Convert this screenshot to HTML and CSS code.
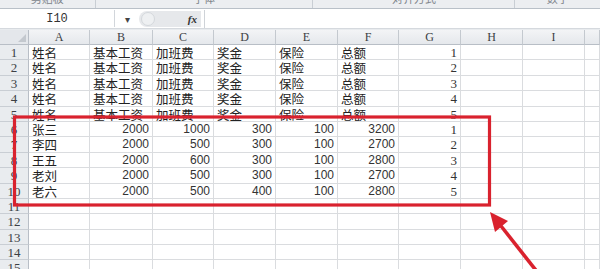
FILE: index.html
```html
<!DOCTYPE html>
<html lang="zh-CN">
<head>
  <meta charset="UTF-8" />
  <title>工资表</title>
  <link rel="stylesheet" href="styles.css">
</head>
<body>

<div class="ribbon">
  <div class="group g1"><span>剪贴板</span></div>
  <div class="group g2"><span>字体</span></div>
  <div class="group g3"><span>对齐方式</span></div>
  <div class="group g4"><span>数字</span></div>
</div>

<div class="formula-bar">
  <div class="name-box">I10</div>
  <div class="drop">▾</div>
  <div class="pill"><span class="knob"></span><span class="fx">fx</span></div>
  <div class="formula-input"></div>
</div>

<div class="sheet-wrap">
  <div class="sheet" id="sheet"></div>

  <svg class="mark" viewBox="0 0 600 269" width="600" height="269">
    <rect x="14.5" y="117" width="475" height="88" fill="none" stroke="#d9222e" stroke-width="3.2" />
    <line x1="501" y1="226" x2="542" y2="278" stroke="#d9222e" stroke-width="3.6" />
    <polygon points="490,212 508,221 495,232" fill="#d9222e" />
  </svg>
</div>

<script>
  const cols = ['A', 'B', 'C', 'D', 'E', 'F', 'G', 'H', 'I', ''];
  const heads = ['姓名', '基本工资', '加班费', '奖金', '保险', '总额'];
  const people = [
    ['张三', 2000, 1000, 300, 100, 3200, 1],
    ['李四', 2000, 500, 300, 100, 2700, 2],
    ['王五', 2000, 600, 300, 100, 2800, 3],
    ['老刘', 2000, 500, 300, 100, 2700, 4],
    ['老六', 2000, 500, 400, 100, 2800, 5]
  ];

  const sheet = document.getElementById('sheet');
  let html = '<div class="corner"></div>';
  cols.forEach(c => { html += `<div class="ch">${c}</div>`; });

  for (let r = 1; r <= 15; r++) {
    let cells = [];
    if (r <= 5) {
      cells = heads.map(t => ['txt', t]).concat([['g', r]]);
    } else if (r <= 10) {
      const p = people[r - 6];
      cells = [['txt', p[0]]];
      for (let i = 1; i <= 5; i++) cells.push(['num', p[i]]);
      cells.push(['g', p[6]]);
    }
    while (cells.length < 10) cells.push(['', '']);

    html += `<div class="rh">${r}</div>`;
    cells.forEach(([cls, v]) => { html += `<div class="c ${cls}">${v}</div>`; });
  }
  sheet.innerHTML = html;
</script>

</body>
</html>
```

FILE: styles.css
```css
body {
  margin: 0;
  width: 600px;
  height: 269px;
  overflow: hidden;
  background: #fff;
  font-family: "Noto Sans CJK SC", sans-serif;
  color: #222;
}
.ribbon {
  display: flex;
  height: 8px;
  overflow: hidden;
  background: #eceef1;
  border-bottom: 1px solid #b9c0c8;
}
.group {
  display: flex;
  justify-content: center;
  border-right: 1px solid #c9ced4;
}
.group span {
  margin-top: -9px;
  font-size: 11px;
  line-height: 14px;
  color: #80858c;
}
.g1 { width: 95px; }
.g2 { width: 218px; }
.g3 { width: 202px; }
.g4 { width: 85px; border-right: none; }

.formula-bar {
  display: flex;
  align-items: center;
  height: 19px;
  background: #fff;
  border-bottom: 1px solid #d5d9de;
}
.name-box {
  width: 114px;
  height: 17px;
  border-right: 1px solid #d2d6db;
  text-align: center;
  font-family: "Liberation Mono", monospace;
  font-size: 12px;
  line-height: 18px;
  color: #333;
}
.drop {
  width: 24px;
  text-align: center;
  font-size: 10px;
  color: #444;
}
.pill {
  display: flex;
  align-items: center;
  justify-content: space-between;
  width: 62px;
  height: 16px;
  background: #e6e8eb;
  border-radius: 8px 0 0 8px;
}
.knob {
  width: 12px;
  height: 12px;
  margin-left: 2px;
  border-radius: 50%;
  background: #eef0f2;
  border: 1px solid #d4d8dc;
}
.fx {
  margin-right: 4px;
  font-family: "Liberation Serif", serif;
  font-style: italic;
  font-weight: bold;
  font-size: 11px;
  color: #333;
}
.formula-input {
  flex: 1;
  height: 18px;
  margin-left: 3px;
  border-left: 1px solid #cfd3d8;
  background: #fff;
}

.sheet-wrap {
  position: relative;
  padding-top: 1px;
  background: #e8ebee;
}
.sheet {
  display: grid;
  grid-template-columns: 29px 61px 63px 61px 62px 62px 61px 62px 62px 62px 1fr;
  grid-template-rows: 15px;
  grid-auto-rows: 15.4px;
  background: #fff;
}
.corner, .ch, .rh, .c {
  box-sizing: border-box;
  overflow: hidden;
  white-space: nowrap;
}
.corner {
  position: relative;
  background: #e4e7eb;
  border-right: 1px solid #b8bec6;
  border-bottom: 1px solid #b8bec6;
}
.corner::after {
  content: "";
  position: absolute;
  right: 2px;
  bottom: 2px;
  border-left: 8px solid transparent;
  border-bottom: 8px solid #c3c8ce;
}
.ch {
  background: linear-gradient(#f3f4f6, #e5e8ec);
  border-right: 1px solid #c4c9cf;
  border-bottom: 1px solid #b8bec6;
  text-align: center;
  font-family: "Liberation Serif", serif;
  font-size: 12px;
  line-height: 15px;
  color: #3c3f44;
}
.rh {
  background: #e9ecef;
  border-right: 1px solid #b8bec6;
  border-bottom: 1px solid #c9ced4;
  text-align: center;
  font-family: "Liberation Serif", serif;
  font-size: 13px;
  line-height: 15px;
  color: #3c3f44;
}
.c {
  border-right: 1px solid #dadcdf;
  border-bottom: 1px solid #dadcdf;
  padding: 0 3px;
  font-size: 12.5px;
  line-height: 15px;
}
.num {
  text-align: right;
  font-family: "Liberation Sans", sans-serif;
  font-size: 12px;
  color: #333;
}
.g {
  text-align: right;
  font-family: "Liberation Serif", serif;
  font-size: 13px;
  color: #333;
}
.mark {
  position: absolute;
  left: 0;
  top: -29px;
  pointer-events: none;
}
```
